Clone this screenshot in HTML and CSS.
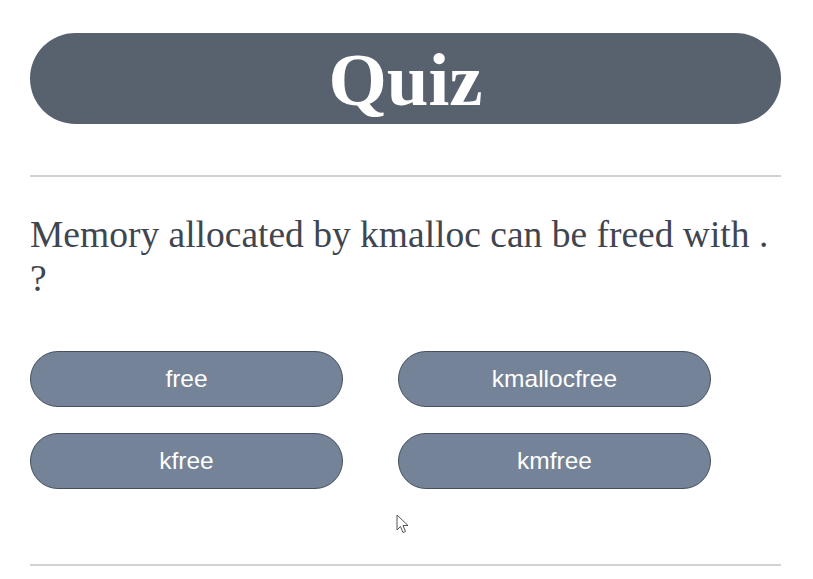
FILE: index.html
```html
<!DOCTYPE html>
<html lang="en">
<head>
<meta charset="utf-8">
<title>Quiz</title>
<link rel="stylesheet" href="styles.css">
</head>
<body>
<main class="quiz">
  <header class="quiz-title"><h1>Quiz</h1></header>
  <hr class="rule rule-top">
  <p class="question">Memory allocated by kmalloc can be freed with . ?</p>
  <div class="answers">
    <button class="answer">free</button>
    <button class="answer">kmallocfree</button>
    <button class="answer">kfree</button>
    <button class="answer">kmfree</button>
  </div>
  <hr class="rule rule-bottom">
</main>
<svg class="cursor" width="14" height="22" viewBox="0 0 14 22" aria-hidden="true">
  <path d="M1 1 L1 16 L4.5 12.5 L7 18.5 L9.5 17.5 L7 11.5 L12 11.5 Z" fill="#fff" stroke="#555" stroke-width="1" stroke-linejoin="round"/>
</svg>
</body>
</html>
```
FILE: styles.css
```css
html, body {
  margin: 0;
  padding: 0;
  background: #ffffff;
}

body {
  position: relative;
  width: 813px;
  height: 579px;
  overflow: hidden;
}

.quiz {
  padding: 33px 32px 0 30px;
  display: flex;
  flex-direction: column;
}

.quiz-title {
  height: 91px;
  background: #57626e;
  border-radius: 46px;
  display: flex;
  align-items: center;
  justify-content: center;
}

.quiz-title h1 {
  margin: 0;
  font-family: "Liberation Serif", "Times New Roman", serif;
  font-weight: bold;
  font-size: 75px;
  line-height: 1;
  color: #ffffff;
  padding-top: 2px;
}

.rule {
  border: 0;
  height: 2px;
  background: #d2d2d2;
  margin: 0;
}

.rule-top {
  margin-top: 51px;
}

.question {
  margin: 36px 0 0 0;
  font-family: "Liberation Serif", "Times New Roman", serif;
  font-size: 37.5px;
  line-height: 44px;
  color: #3f4650;
}

.answers {
  margin-top: 50px;
  display: grid;
  grid-template-columns: 313px 313px;
  column-gap: 55px;
  row-gap: 26px;
}

.answer {
  height: 56px;
  border-radius: 28px;
  border: 1px solid #46505e;
  background: #748397;
  color: #ffffff;
  font-family: "Liberation Sans", Arial, sans-serif;
  font-size: 24.5px;
  padding: 0;
}

.rule-bottom {
  margin-top: 75px;
}

.cursor {
  position: absolute;
  left: 396px;
  top: 514px;
}
```
